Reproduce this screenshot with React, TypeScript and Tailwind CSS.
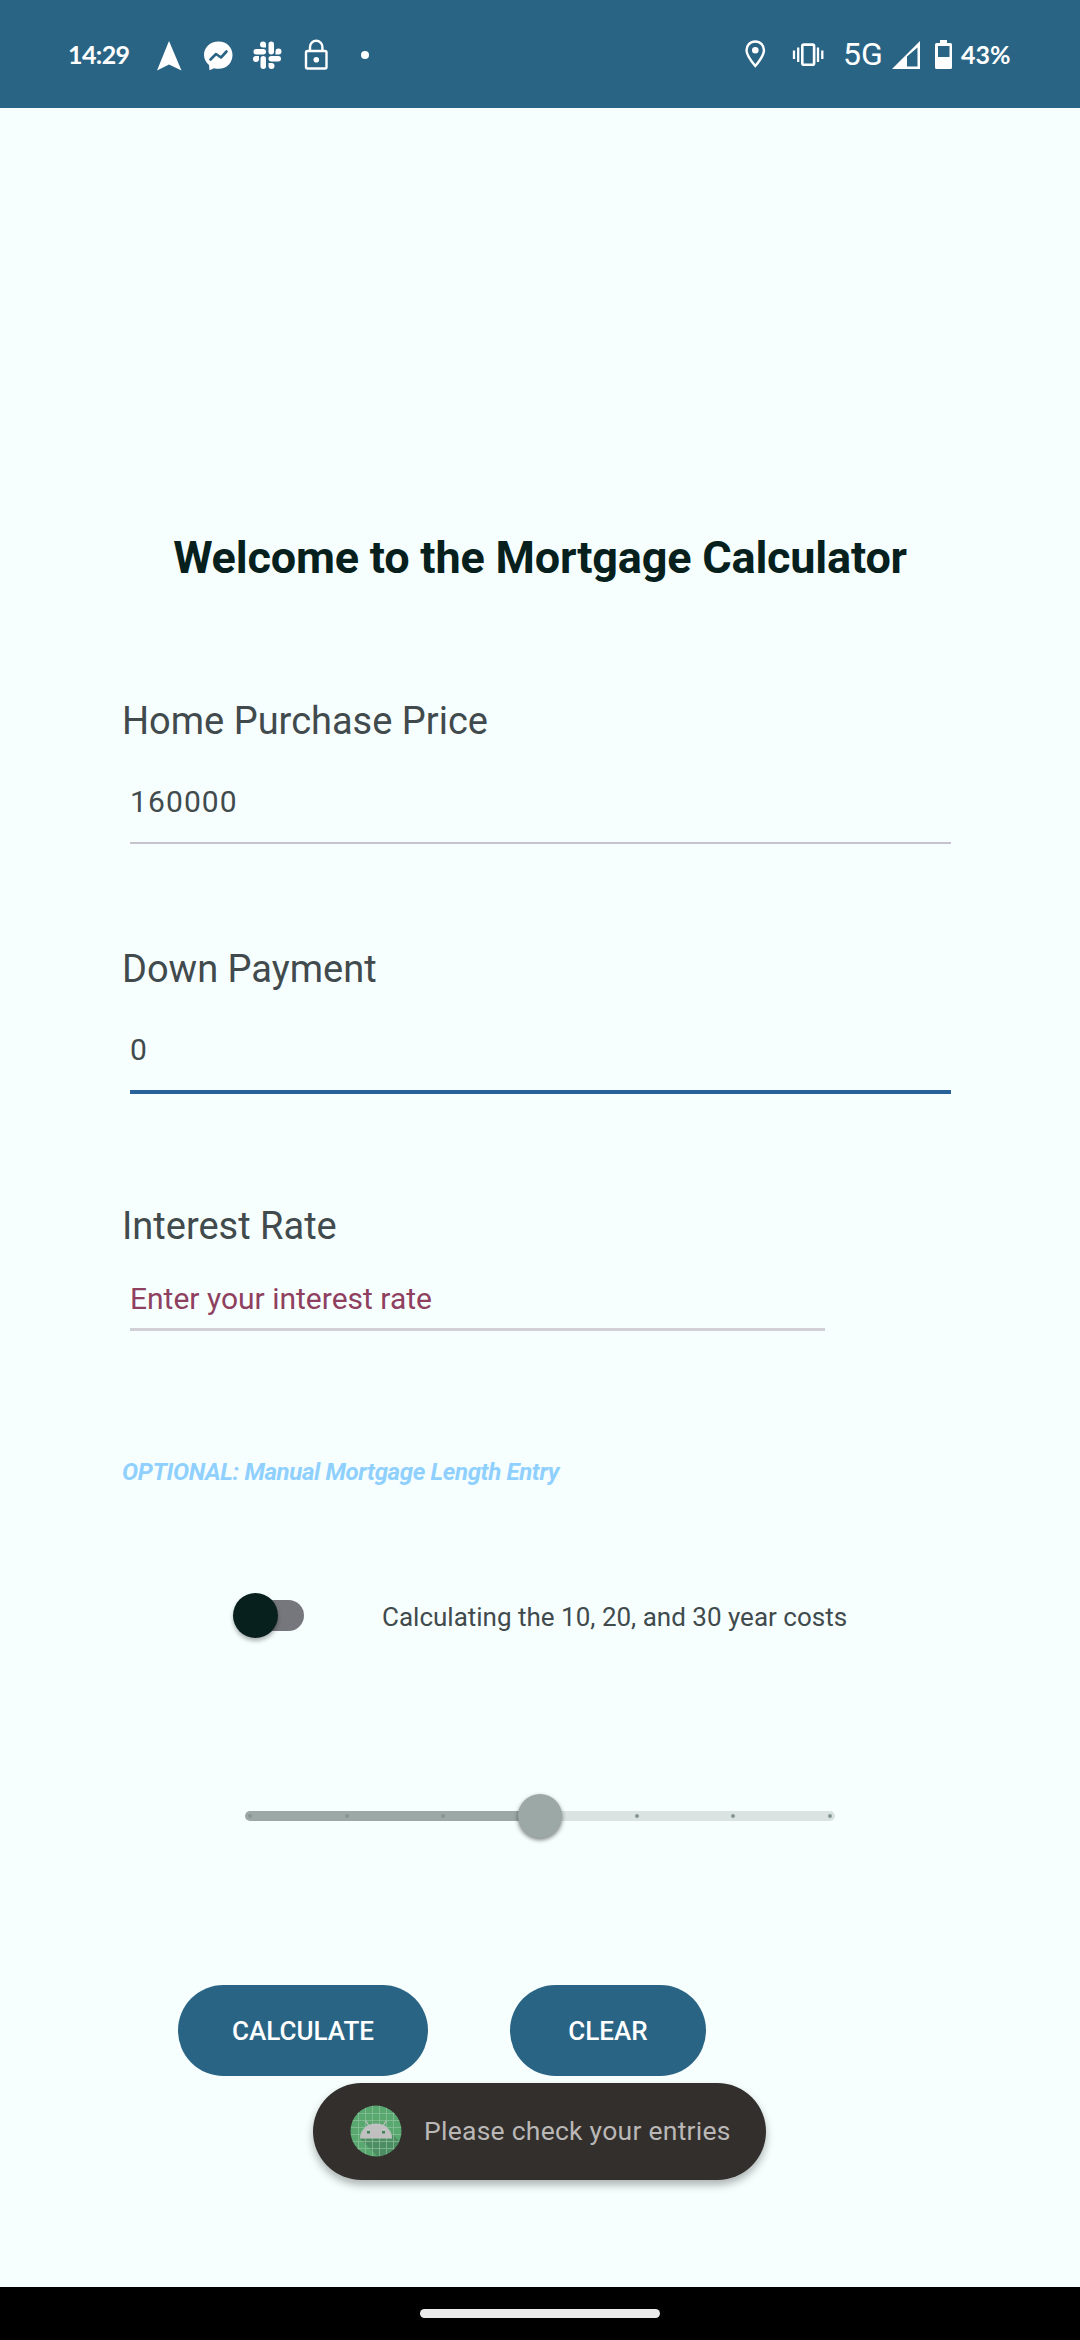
import type { ReactNode } from "react";

function StatusBar() {
  return (
    <header className="flex h-[108px] items-start bg-[#2a6485] text-white">
      <div className="flex h-[108px] w-full items-center pr-[67px] pl-[68px]">
        <span className="w-[62px] font-['Lato'] text-[25px] leading-[30px] font-bold tracking-[-0.6px] whitespace-nowrap">14:29</span>
        <svg className="ml-[20px]" width="300" height="108" viewBox="150 0 300 108" fill="#fff">
          <path d="M169 41 L181.500 70.500 L169 64.500 L157 70.500 Z" />
          <path d="M218.500 41.500 C210 41.500 204 47.500 204 55 C204 59 206 62.500 209 65 L209.500 70.300 L214 68.300 C215.500 68.700 217 68.800 218.500 68.800 C227 68.800 232.500 62.500 232.500 55 C232.500 47.500 227 41.500 218.500 41.500 Z" />
          <path d="M210.500 59.500 L216 54 L221 57.500 L226.500 51.500" fill="none" stroke="#2a6485" strokeWidth="2.600" strokeLinejoin="round" strokeLinecap="round" />
          <g>
            <rect x="253.500" y="49" width="12.500" height="5.500" rx="2.750" />
            <path d="M266 47.500 V44.500 A3 3 0 1 0 263 47.500 Z" />
            <rect x="268.500" y="41.500" width="5.500" height="13" rx="2.750" />
            <path d="M275.500 54.500 V51.500 A3 3 0 1 1 278.500 54.500 Z" />
            <rect x="268.500" y="56" width="12.500" height="5.500" rx="2.750" />
            <path d="M268.500 63 H271.500 A3 3 0 1 1 268.500 66 Z" />
            <rect x="260.500" y="56" width="5.500" height="13" rx="2.750" />
            <path d="M259 56 V59 A3 3 0 1 1 256 56 Z" />
          </g>
          <rect x="306" y="51" width="20.500" height="17.500" rx="1.500" fill="none" stroke="#fff" strokeWidth="2.400" />
          <path d="M310 51 V47 A6.200 6.200 0 0 1 322.400 47 V51" fill="none" stroke="#fff" strokeWidth="2.400" />
          <circle cx="316.300" cy="59.700" r="2.800" />
          <circle cx="365" cy="55" r="4" />
        </svg>
        <svg className="ml-auto" width="98" height="108" viewBox="735 0 98 108" fill="#fff">
          <path d="M754.300 41.500 C748.800 41.500 745.500 45.700 745.500 50.300 C745.500 55.700 750.500 61.500 754.300 66 C758.100 61.500 763 55.700 763 50.300 C763 45.700 759.500 41.500 754.300 41.500 Z" fill="none" stroke="#fff" strokeWidth="2.400" />
          <circle cx="754.300" cy="50.300" r="3.300" />
          <g fill="none" stroke="#fff">
            <rect x="801.300" y="44.600" width="11.800" height="20.200" rx="1.500" strokeWidth="2.600" />
            <path d="M797.200 47.500 V62 M817 47.500 V62" strokeWidth="2.300" />
            <path d="M793 50.500 V59 M821.300 50.500 V59" strokeWidth="2.300" />
          </g>
        </svg>
        <span className="ml-[9px] w-[44px] font-['Roboto'] text-[32px] leading-[36px] whitespace-nowrap">5G</span>
        <svg className="ml-[4px]" width="68" height="108" viewBox="890 0 68 108" fill="#fff">
          <path fillRule="evenodd" d="M891 69 L919 41 V69 Z M906 56.500 V66.500 H916.500 V47.500 Z" />
          <path d="M939 40 H946 V43 H949.500 Q951 43 951 44.500 V67.500 Q951 69 949.500 69 H935.500 Q934 69 934 67.500 V44.500 Q934 43 935.500 43 H939 Z" />
          <rect x="937" y="46" width="11.500" height="11" fill="#2a6485" />
        </svg>
        <span className="ml-[2px] w-[52px] font-['Lato'] text-[25px] leading-[30px] font-bold whitespace-nowrap">43%</span>
      </div>
    </header>
  );
}

function Label({ children }: { children: ReactNode }) {
  return <label className="block h-[50px] text-[38px] leading-[50px] whitespace-nowrap">{children}</label>;
}

function PurchaseForm() {
  return (
    <section className="pl-[122px]">
      <div className="mt-[108px]">
        <Label>Home Purchase Price</Label>
        <div className="mt-[36px] ml-2 h-[62px] w-[821px] border-b-2 border-[#c7c3ce] text-[30px] leading-[40px] tracking-[1.1px]">160000</div>
      </div>
      <div className="mt-[100px]">
        <Label>Down Payment</Label>
        <div className="mt-[36px] ml-2 h-[64px] w-[821px] border-b-4 border-[#27639a] text-[30px] leading-[40px] tracking-[1.1px]">0</div>
      </div>
      <div className="mt-[107px]">
        <Label>Interest Rate</Label>
        <div className="mt-[28px] ml-2 h-[52px] w-[695px] border-b-[3px] border-[#d1cfd8] text-[30px] leading-[40px] text-[#8f405f]">Enter your interest rate</div>
      </div>
      <p className="mt-[126px] h-[30px] text-[24px] leading-[30px] font-bold tracking-[-0.34px] text-[#8fd0ff] italic">OPTIONAL: Manual Mortgage Length Entry</p>
    </section>
  );
}

function LengthSwitch() {
  return (
    <div className="mt-[103px] flex h-[51px] items-center pl-[233px]">
      <div className="flex h-[31px] w-[71px] items-center rounded-full bg-gradient-to-r from-transparent from-30% to-[#75777d] to-30%">
        <div className="h-[45px] w-[45px] shrink-0 rounded-full bg-[#071f1d] shadow-[0_3px_4px_rgba(0,0,0,0.3)]" />
      </div>
      <span className="ml-[78px] pt-[2px] text-[26px] leading-[40px] whitespace-nowrap">Calculating the 10, 20, and 30 year costs</span>
    </div>
  );
}

const ticks = [0, 1, 2, 3, 4, 5, 6];

function YearSlider() {
  return (
    <div className="mt-[153px] flex justify-center">
      <div className="relative h-[44px] w-[590px]">
        <div className="absolute top-[17px] flex h-[10px] w-full items-center justify-between overflow-hidden rounded-full bg-gradient-to-r from-[#9ba8a6] from-50% to-[#dae3e1] to-50% px-[3px]">
          {ticks.map((t) => (
            <span key={t} className="h-1 w-1 rounded-full bg-[#859794]" />
          ))}
        </div>
        <div className="absolute top-0 left-[273px] h-[44px] w-[44px] rounded-full bg-[#9ba8a6] shadow-[0_2px_4px_rgba(0,0,0,0.5)]" />
      </div>
    </div>
  );
}

function RobotBadge() {
  return (
    <svg className="-mt-px" width="52" height="52" viewBox="0 0 52 52">
      <clipPath id="disc"><circle cx="26" cy="26" r="25.500" /></clipPath>
      <g clipPath="url(#disc)">
        <rect width="52" height="52" fill="#58a870" />
        <path d="M10 33.500 L42 33.500 V29 L60 47 V60 H36 Z" fill="#4c8e62" />
        <path d="M8.500 0V52M15.500 0V52M22.500 0V52M29.500 0V52M36.500 0V52M43.500 0V52M0 8.500H52M0 15.500H52M0 22.500H52M0 29.500H52M0 36.500H52M0 43.500H52" stroke="#8fc09d" strokeWidth="0.700" />
      </g>
      <path d="M10 33.500 C10 24.500 17 18.500 26 18.500 C35 18.500 42 24.500 42 33.500 Z" fill="#c0c0c0" />
      <path d="M19 21 L15.500 15.500 M33 21 L36.500 15.500" stroke="#c0c0c0" strokeWidth="1.200" />
      <rect x="17" y="26" width="3" height="2.500" fill="#3f8458" />
      <rect x="32" y="26" width="3" height="2.500" fill="#3f8458" />
    </svg>
  );
}

export default function App() {
  return (
    <div className="relative flex h-[2340px] w-[1080px] flex-col overflow-hidden bg-[#f6fffe] font-['Roboto',sans-serif] text-[#414a4d]">
      <StatusBar />
      <main className="flex-1">
        <h1 className="mt-[420px] h-[60px] text-center text-[45px] leading-[60px] font-bold tracking-[-0.2px] whitespace-nowrap text-[#071f1d]">Welcome to the Mortgage Calculator</h1>
        <PurchaseForm />
        <LengthSwitch />
        <YearSlider />
        <div className="mt-[147px] flex gap-[82px] pl-[178px] text-[26px] leading-[30px] font-medium text-white">
          <button className="h-[91px] w-[250px] rounded-full bg-[#2a6485]">CALCULATE</button>
          <button className="h-[91px] w-[196px] rounded-full bg-[#2a6485]">CLEAR</button>
        </div>
      </main>
      <div className="absolute top-[2083px] left-[313px] flex h-[97px] w-[453px] items-center rounded-full bg-[#322f2d] pl-[37px] text-[26.5px] leading-[36px] tracking-[0.25px] text-[#bab8b6] shadow-[0_5px_8px_rgba(0,0,0,0.3)]">
        <RobotBadge />
        <span className="-mt-px ml-[22px] whitespace-nowrap">Please check your entries</span>
      </div>
      <nav className="flex h-[53px] justify-center bg-black pt-[22px]">
        <div className="h-[9px] w-[240px] rounded-full bg-[#ebebeb]" />
      </nav>
    </div>
  );
}
